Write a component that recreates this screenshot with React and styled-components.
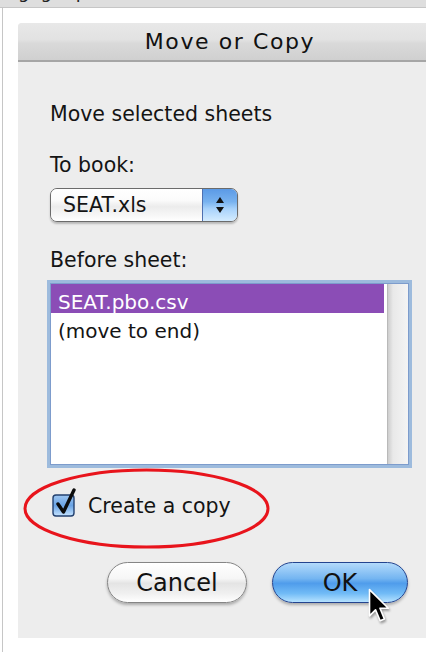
import styled, { createGlobalStyle } from 'styled-components';

const GlobalStyle = createGlobalStyle`
  html, body {
    margin: 0;
    padding: 0;
    background: #fff;
  }
  body {
    font-family: "DejaVu Sans", "Liberation Sans", sans-serif;
    color: #141414;
  }
`;

const Page = styled.div`
  width: 426px;
  height: 652px;
  overflow: hidden;
  display: flex;
  flex-direction: column;
  background: #fff;
`;

/* the tail of the previous paragraph, mostly scrolled away */
const CaptionStrip = styled.div`
  height: 8px;
  flex-shrink: 0;
  box-sizing: border-box;
  background: #dedede;
  border-bottom: 1px solid #c6c6c6;
  overflow: hidden;
  display: flex;
  align-items: flex-end;
  padding: 0 0 5px 18px;
  font-size: 18px;
  line-height: 20px;
  color: #222;
`;

const Frame = styled.div`
  flex: 1;
  margin-left: 2px;
  border-left: 1px solid #c6c6c6;
  padding: 15px 0 0 15px;
  overflow: hidden;
  background: #fff;
`;

const Dialog = styled.div`
  width: 424px;
  display: flex;
  flex-direction: column;
  background: #ededed;
  border-radius: 4px 4px 0 0;
`;

const TitleBar = styled.div`
  height: 37px;
  border-bottom: 2px solid #a6a6a6;
  border-radius: 4px 4px 0 0;
  background: linear-gradient(#e8e8e8, #e2e2e2 45%, #d9d9d9 55%, #d0d0d0);
  text-align: center;
  font-size: 22px;
  line-height: 37px;
  letter-spacing: 1.6px;
  color: #111;
`;

const Body = styled.div`
  display: flex;
  flex-direction: column;
  align-items: flex-start;
  padding: 40px 0 35px 32px;
`;

const Label = styled.div`
  font-size: 20.5px;
  line-height: 24px;
  margin-top: ${(p) => p.$gap || 0}px;
`;

const PopUp = styled.div`
  margin-top: 11px;
  width: 188px;
  height: 34px;
  box-sizing: border-box;
  display: flex;
  border: 1px solid #6b6b6b;
  border-radius: 7px;
  overflow: hidden;
  box-shadow: 0 2px 2px rgba(0, 0, 0, 0.22);
`;

const PopUpValue = styled.div`
  flex: 1;
  padding-left: 12px;
  display: flex;
  align-items: center;
  font-size: 20.5px;
  line-height: 24px;
  background: linear-gradient(#fff, #fbfbfb 35%, #ececec 55%, #f6f6f6 80%, #fff);
`;

const PopUpArrows = styled.div`
  width: 34px;
  display: flex;
  flex-direction: column;
  align-items: center;
  justify-content: center;
  gap: 4px;
  border-left: 1px solid #4f70b0;
  background: linear-gradient(#5b9ae6, #78b2ef 40%, #a8d2fb 62%, #d4ecff);
`;

const Triangle = styled.span`
  width: 0;
  height: 0;
  border-left: 4px solid transparent;
  border-right: 4px solid transparent;
  ${(p) => (p.$down ? 'border-top: 6px solid #111;' : 'border-bottom: 6px solid #111;')}
`;

const ListBox = styled.div`
  margin-top: 11px;
  width: 359px;
  height: 182px;
  box-sizing: border-box;
  display: grid;
  grid-template-columns: 1fr 21px;
  border: 1px solid #7d9ccc;
  background: #fff;
  box-shadow: 0 0 0 3px rgba(130, 170, 215, 0.75);
`;

const Rows = styled.div`
  display: flex;
  flex-direction: column;
  padding-right: 3px;
`;

const Row = styled.div`
  height: 29px;
  display: flex;
  align-items: flex-end;
  padding-left: 7px;
  font-size: 20px;
  line-height: 22px;
  color: ${(p) => (p.$selected ? '#fff' : '#141414')};
  background: ${(p) => (p.$selected ? '#8b4db6' : 'transparent')};
`;

const ScrollTrack = styled.div`
  border-left: 1px solid #b9b9b9;
  background: linear-gradient(to right, #cdcdcd, #e9e9e9 5px, #f4f4f4);
`;

const CheckRow = styled.div`
  position: relative;
  margin-top: 29px;
  display: flex;
  align-items: center;
  gap: 12px;
  padding-left: 2px;
  font-size: 20.5px;
  line-height: 24px;
`;

const CheckBox = styled.svg`
  overflow: visible;
  flex-shrink: 0;
`;

const Highlight = styled.svg`
  position: absolute;
  left: -27px;
  top: -26px;
  pointer-events: none;
`;

const Buttons = styled.div`
  margin: 44px 0 0 57px;
  display: flex;
  gap: 25px;
`;

const Button = styled.div`
  position: relative;
  width: ${(p) => p.$width}px;
  height: 41px;
  box-sizing: border-box;
  border-radius: 21px;
  display: flex;
  align-items: center;
  justify-content: center;
  font-size: 24px;
  color: #111;
  border: 1px solid ${(p) => (p.$primary ? '#24448f' : '#858585')};
  background: ${(p) =>
    p.$primary
      ? 'linear-gradient(#b3dafb, #74b5f1 40%, #4f9ceb 52%, #71bbf6 78%, #b6e2ff)'
      : 'linear-gradient(#fff, #f6f6f6 40%, #e4e4e4 52%, #f0f0f0 78%, #fff)'};
  box-shadow: 0 2px 3px rgba(0, 0, 0, 0.28);
`;

const Pointer = styled.svg`
  position: absolute;
  left: 94px;
  top: 25px;
  filter: drop-shadow(1px 2px 1px rgba(0, 0, 0, 0.35));
`;

const App = () => {
  return (
    <Page>
      <GlobalStyle />
      <CaptionStrip>gag top</CaptionStrip>
      <Frame>
        <Dialog>
          <TitleBar>Move or Copy</TitleBar>
          <Body>
            <Label>Move selected sheets</Label>
            <Label $gap={27}>To book:</Label>
            <PopUp>
              <PopUpValue>SEAT.xls</PopUpValue>
              <PopUpArrows>
                <Triangle />
                <Triangle $down />
              </PopUpArrows>
            </PopUp>
            <Label $gap={26}>Before sheet:</Label>
            <ListBox>
              <Rows>
                <Row $selected>SEAT.pbo.csv</Row>
                <Row>(move to end)</Row>
              </Rows>
              <ScrollTrack />
            </ListBox>
            <CheckRow>
              <CheckBox width="24" height="24" viewBox="0 0 24 24">
                <defs>
                  <linearGradient id="boxFill" x1="0" y1="0" x2="0" y2="1">
                    <stop offset="0" stopColor="#9ec6f1" />
                    <stop offset="0.5" stopColor="#6aa3e4" />
                    <stop offset="1" stopColor="#c6e4ff" />
                  </linearGradient>
                </defs>
                <rect x="1" y="1" width="21" height="21" rx="3" fill="url(#boxFill)" stroke="#23406f" strokeWidth="1.4" />
                <path d="M6 10 L11.5 18 L22 -4" fill="none" stroke="#0c0c0c" strokeWidth="3.4" strokeLinecap="round" strokeLinejoin="round" />
              </CheckBox>
              <span>Create a copy</span>
              <Highlight width="247" height="81" viewBox="0 0 247 81">
                <ellipse cx="123.5" cy="40.5" rx="121.5" ry="38.5" fill="none" stroke="#e8141c" strokeWidth="3" />
              </Highlight>
            </CheckRow>
            <Buttons>
              <Button $width={140}>Cancel</Button>
              <Button $width={136} $primary>
                OK
                <Pointer width="23" height="36" viewBox="0 0 14 22">
                  <path d="M1.5 1 L1.5 17 L5.2 13.4 L8 20 L10.6 18.9 L7.9 12.4 L13 12.4 Z" fill="#000" stroke="#fff" strokeWidth="1" strokeLinejoin="round" />
                </Pointer>
              </Button>
            </Buttons>
          </Body>
        </Dialog>
      </Frame>
    </Page>
  );
};

export default App;
